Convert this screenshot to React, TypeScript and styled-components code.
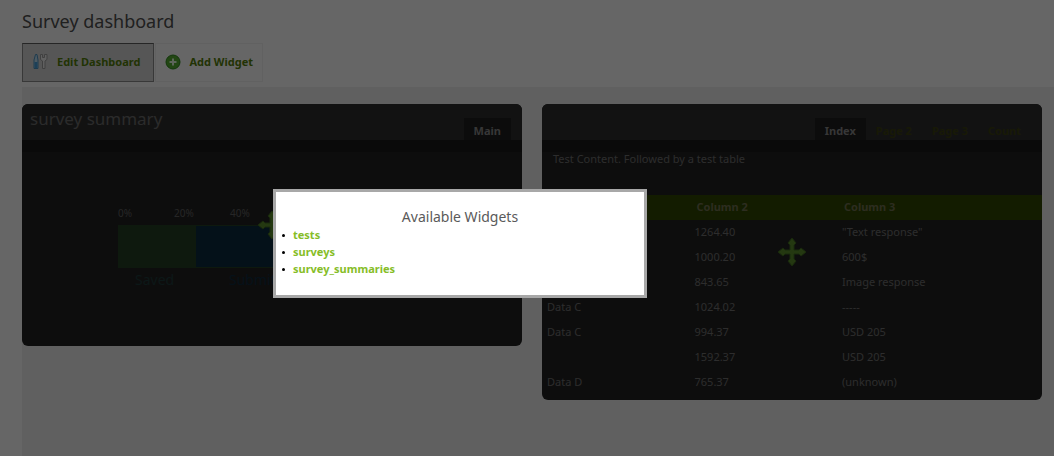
import React from "react";
import styled, { createGlobalStyle } from "styled-components";

const GlobalStyle = createGlobalStyle`
  *, *::before, *::after { box-sizing: border-box; }
  body {
    margin: 0;
    background: #ffffff;
    color: #666666;
    font-family: "Noto Sans", "Open Sans", sans-serif;
    font-size: 11px;
    line-height: 17px;
  }
  h1, h2, p, ul { margin: 0; padding: 0; font-weight: 400; }
`;

const Page = styled.div`
  display: flex;
  flex-direction: column;
  min-height: 100vh;
  padding-left: 22px;
`;

const Title = styled.h1`
  padding-top: 8px;
  font-size: 18px;
  line-height: 27px;
  color: #505050;
`;

const Toolbar = styled.div`
  display: flex;
  gap: 1px;
  padding: 8px 0 5px;
`;

const ToolButton = styled.button<{ $pressed?: boolean }>`
  display: flex;
  align-items: center;
  gap: 8px;
  height: 39px;
  padding: 0 ${(p) => (p.$pressed ? 13 : 9)}px 2px 9px;
  border: 1px solid ${(p) => (p.$pressed ? "#8c8c8c" : "#f2f2f2")};
  border-top-color: ${(p) => (p.$pressed ? "#606060" : "#f2f2f2")};
  background: ${(p) => (p.$pressed ? "#d8d8d8" : "#ffffff")};
  color: #55800a;
  font: 700 11px/17px "Noto Sans", "Open Sans", sans-serif;
`;

const Workspace = styled.main`
  flex: 1;
  display: grid;
  grid-template-columns: 1fr 1fr;
  align-items: start;
  gap: 20px;
  padding: 17px 12px 17px 0;
  background: #f0f0f0;
`;

const Widget = styled.section`
  position: relative;
  overflow: hidden;
  border-radius: 6px;
  background: linear-gradient(#1b1b1b 48px, #222222 48px);
`;

const WidgetHeader = styled.header`
  display: flex;
  justify-content: space-between;
  height: 36px;
  padding: 0 11px 0 8px;
  background: #2f2f2f;
`;

const WidgetTitle = styled.h2`
  padding-top: 2px;
  font-size: 17px;
  line-height: 26px;
  color: #6c6c6c;
`;

const Tabs = styled.nav`
  display: flex;
  align-items: flex-end;
  margin-left: auto;
`;

const Tab = styled.button<{ $active?: boolean }>`
  height: 22px;
  padding: 2px 10px 0;
  border: 0;
  background: ${(p) => (p.$active ? "#1e1e1e" : "transparent")};
  color: ${(p) => (p.$active ? "#8a8a8a" : "#3c4010")};
  font: 700 11px/17px "Noto Sans", "Open Sans", sans-serif;
`;

const ChartBody = styled.div`
  height: 206px;
  padding: 65px 96px 0;
`;

const Scale = styled.div`
  display: flex;
  font-size: 10px;
  color: #606060;
`;

const Tick = styled.span`
  flex: 0 0 56px;
`;

const Bars = styled.div`
  display: grid;
  grid-template-columns: 1fr 3fr;
  height: 43px;
  margin-top: 3px;
  border: 1px solid #233f23;
`;

const Bar = styled.div<{ $color: string }>`
  background: ${(p) => p.$color};
`;

const Legend = styled.div`
  display: grid;
  grid-template-columns: 1fr 3fr;
  font-size: 14px;
  line-height: 24px;
`;

const LegendItem = styled.span<{ $indent: number; $color: string }>`
  padding-left: ${(p) => p.$indent}px;
  color: ${(p) => p.$color};
`;

const Intro = styled.p`
  padding: 10px 11px 28px;
  color: #707070;
`;

const DataTable = styled.table`
  width: 100%;
  margin-bottom: 5px;
  border-collapse: collapse;
  table-layout: fixed;
  color: #707070;
  th, td { height: 25px; padding: 0 5px 2px; text-align: left; }
  th { padding: 0 7px 2px; background: #304800; color: #707050; font-weight: 700; }
  th:nth-child(n + 3), td:nth-child(n + 3) { width: 41%; }
`;

const MoveHandle = styled.svg`
  position: absolute;
  left: 50%;
  top: 50%;
  width: 28px;
  height: 28px;
  transform: translate(-50%, -50%);
`;

const Overlay = styled.div`
  position: fixed;
  inset: 0;
  background: rgba(0, 0, 0, 0.6);
`;

const Dialog = styled.div`
  position: fixed;
  left: calc(50% - 254px);
  top: 189px;
  width: 374px;
  padding: 16px 9px 18px 17px;
  border: 3px solid #a8a8a8;
  background: #ffffff;
`;

const DialogTitle = styled.h2`
  padding-right: 8px;
  text-align: center;
  font-size: 14px;
  line-height: 18px;
  color: #5a5a5a;
`;

const WidgetList = styled.ul`
  list-style: none;
`;

const WidgetItem = styled.li`
  display: flex;
  align-items: center;
  gap: 8px;
  margin-left: -11px;
  &::before {
    content: "";
    width: 3px;
    height: 3px;
    margin-top: 2px;
    border-radius: 50%;
    background: #000000;
  }
`;

const WidgetLink = styled.a`
  color: #86bd27;
  font-weight: 700;
  text-decoration: none;
`;

const ToolsIcon = () => (
  <svg width="17" height="17" viewBox="0 0 17 17" fill="none" aria-hidden="true">
    <path d="M3.500 1.500h1.500L6 7v8.500H2V7z" fill="#bfe0f5" stroke="#4d94c4" />
    <path d="M2.500 9h3v6h-3z" fill="#4aa0dc" />
    <path
      d="M8.500 1.500h2v3h2v-3h2.500v5l-2 1.500v7.500h-2.500V8l-2-1.500z"
      fill="#f0f0f0"
      stroke="#a0a0a0"
    />
  </svg>
);

const AddIcon = () => (
  <svg width="16" height="16" viewBox="0 0 16 16" aria-hidden="true">
    <circle cx="8" cy="8" r="7" fill="#55b030" stroke="#2f8a1c" />
    <path d="M8 4.500v7M4.500 8h7" stroke="#e8ffe0" strokeWidth="2" />
  </svg>
);

const MoveIcon = () => (
  <MoveHandle viewBox="0 0 28 28" aria-hidden="true">
    <path
      d="M14 0l4 5-2 2v5h5l2-2 5 4-5 4-2-2h-5v5l2 2-4 5-4-5 2-2v-5H7l-2 2-5-4 5-4 2 2h5V7l-2-2z"
      fill="#5a8c2c"
      stroke="#406820"
    />
  </MoveHandle>
);

const rows = [
  ["Data A", "1264.40", "\"Text response\""],
  ["Data B", "1000.20", "600$"],
  ["Data B", "843.65", "Image response"],
  ["Data C", "1024.02", "-----"],
  ["Data C", "994.37", "USD 205"],
  ["", "1592.37", "USD 205"],
  ["Data D", "765.37", "(unknown)"],
];

export default function App() {
  return (
    <>
      <GlobalStyle />
      <Page>
        <Title>Survey dashboard</Title>
        <Toolbar>
          <ToolButton $pressed><ToolsIcon />Edit Dashboard</ToolButton>
          <ToolButton><AddIcon />Add Widget</ToolButton>
        </Toolbar>
        <Workspace>
          <Widget>
            <WidgetHeader>
              <WidgetTitle>survey summary</WidgetTitle>
              <Tabs><Tab $active>Main</Tab></Tabs>
            </WidgetHeader>
            <ChartBody>
              <Scale>
                {["0%", "20%", "40%"].map((t) => <Tick key={t}>{t}</Tick>)}
              </Scale>
              <Bars><Bar $color="#233f23" /><Bar $color="#0a2c40" /></Bars>
              <Legend>
                <LegendItem $indent={17} $color="#203c3c">Saved</LegendItem>
                <LegendItem $indent={34} $color="#0f2c40">Submitted</LegendItem>
              </Legend>
            </ChartBody>
            <MoveIcon />
          </Widget>
          <Widget>
            <WidgetHeader>
              <Tabs>
                <Tab $active>Index</Tab>
                <Tab>Page 2</Tab>
                <Tab>Page 3</Tab>
                <Tab>Count</Tab>
              </Tabs>
            </WidgetHeader>
            <Intro>Test Content. Followed by a test table</Intro>
            <DataTable>
              <thead>
                <tr><th>Column 1</th><th>Column 2</th><th>Column 3</th></tr>
              </thead>
              <tbody>
                {rows.map((row, i) => (
                  <tr key={i}>{row.map((cell, j) => <td key={j}>{cell}</td>)}</tr>
                ))}
              </tbody>
            </DataTable>
            <MoveIcon />
          </Widget>
        </Workspace>
      </Page>
      <Overlay />
      <Dialog role="dialog" aria-modal="true" aria-labelledby="widgets-title">
        <DialogTitle id="widgets-title">Available Widgets</DialogTitle>
        <WidgetList>
          {["tests", "surveys", "survey_summaries"].map((name) => (
            <WidgetItem key={name}><WidgetLink href="#">{name}</WidgetLink></WidgetItem>
          ))}
        </WidgetList>
      </Dialog>
    </>
  );
}
